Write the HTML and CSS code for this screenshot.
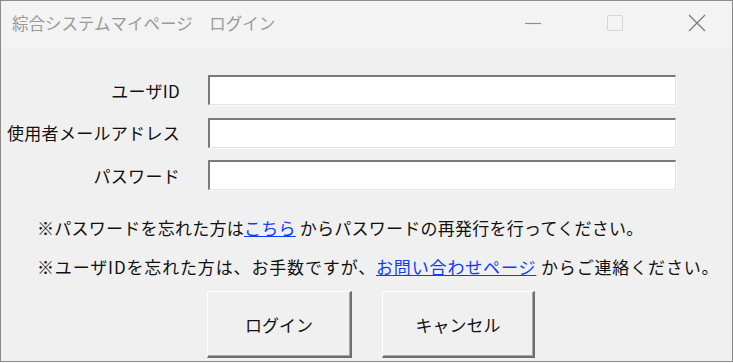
FILE: index.html
```html
<!DOCTYPE html>
<html lang="ja">
<head>
    <meta charset="UTF-8">
    <meta name="viewport" content="width=device-width, initial-scale=1.0">
    <title>綜合システムマイページ ログイン</title>
    <link rel="stylesheet" href="styles.css">
</head>
<body>

    <div class="window">
        <div class="titlebar">
            <span class="title">綜合システムマイページ　ログイン</span>
            <div class="controls">
                <svg class="ctl ctl-min" width="18" height="18" viewBox="0 0 18 18">
                    <path d="M1 9.5H17" stroke="#8c8c8c" stroke-width="1.2"/>
                </svg>
                <svg class="ctl ctl-max" width="18" height="18" viewBox="0 0 18 18">
                    <rect x="1.5" y="1.5" width="15" height="15" rx="1.5" fill="none" stroke="#d6d6d6" stroke-width="1"/>
                </svg>
                <svg class="ctl ctl-close" width="18" height="18" viewBox="0 0 18 18">
                    <path d="M1 1L17 17M17 1L1 17" stroke="#7a7a7a" stroke-width="1.2"/>
                </svg>
            </div>
        </div>

        <div class="content">
            <div class="form">
                <label for="userId">ユーザID</label>
                <input type="text" id="userId">

                <label for="mail">使用者メールアドレス</label>
                <input type="text" id="mail">

                <label for="pass">パスワード</label>
                <input type="password" id="pass">
            </div>

            <p class="note note-pass">※パスワードを忘れた方は<a href="#">こちら</a> からパスワードの再発行を行ってください。</p>
            <p class="note note-id">※ユーザIDを忘れた方は、お手数ですが、<a href="#">お問い合わせページ</a> からご連絡ください。</p>

            <div class="buttons">
                <button class="btn btn-login">ログイン</button>
                <button class="btn btn-cancel">キャンセル</button>
            </div>
        </div>
    </div>

</body>
</html>
```

FILE: styles.css
```css
body {
    margin: 0;
    background: #ffffff;
    font-family: "Noto Sans CJK JP", "Noto Sans", sans-serif;
    color: #111;
}

.window {
    width: 731px;
    height: 360px;
    border: 1px solid #8a8a8a;
    background: #f0f0f0;
    display: flex;
    flex-direction: column;
}

.titlebar {
    height: 48px;
    background: #f3f3f3;
    display: flex;
    align-items: center;
    justify-content: space-between;
}

.title {
    margin-left: 11px;
    margin-top: -4px;
    font-size: 16.5px;
    color: #9a9a9a;
}

.controls {
    display: flex;
    align-items: center;
    margin-top: -4px;
}

.ctl {
    display: block;
}

.ctl-min {
    margin-right: 64px;
}

.ctl-max {
    margin-right: 64px;
}

.ctl-close {
    margin-right: 26px;
}

.content {
    flex: 1;
}

.form {
    display: grid;
    grid-template-columns: 179px 468px;
    column-gap: 28px;
    row-gap: 12.5px;
    margin-top: 26px;
    align-items: center;
}

label {
    text-align: right;
    font-size: 17px;
    letter-spacing: 0.3px;
    white-space: nowrap;
}

input {
    height: 30px;
    box-sizing: border-box;
    margin: 0;
    padding: 2px 4px;
    background: #fff;
    border-top: 2px solid #7a7a7a;
    border-left: 2px solid #7a7a7a;
    border-right: 1px solid #e3e3e3;
    border-bottom: 1px solid #e3e3e3;
    box-shadow: 1px 1px 0 #f8f8f8;
    font-size: 16px;
    outline: none;
}

.note {
    margin: 0 0 0 36px;
    font-size: 17px;
    line-height: 39px;
    white-space: nowrap;
}

.note-pass {
    margin-top: 18px;
    letter-spacing: 0.25px;
}

.note-id {
    letter-spacing: 0.85px;
}

.note a {
    color: #0a3cff;
    text-decoration: underline;
}

.buttons {
    display: flex;
    gap: 30px;
    margin-left: 206px;
    margin-top: 5px;
}

.btn {
    height: 67px;
    box-sizing: border-box;
    background: #f0f0f0;
    border-top: 1px solid #ffffff;
    border-left: 1px solid #ffffff;
    border-right: 2px solid #6e6e6e;
    border-bottom: 2px solid #6e6e6e;
    box-shadow: inset -1px -1px 0 #a8a8a8;
    font-family: "Noto Sans CJK JP", "Noto Sans", sans-serif;
    font-size: 17px;
    color: #111;
    padding: 0;
}

.btn-login {
    width: 145px;
}

.btn-cancel {
    width: 153px;
}
```
